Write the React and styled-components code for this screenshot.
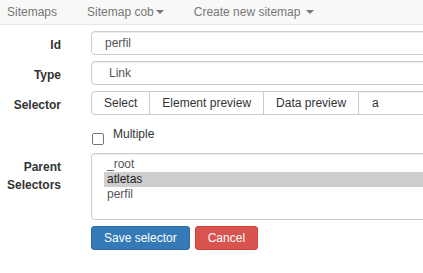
import React from "react";
import styled, { createGlobalStyle } from "styled-components";

const GlobalStyle = createGlobalStyle`
  html, body {
    margin: 0;
    padding: 0;
    overflow: hidden;
    background: #fff;
  }
  body {
    font-family: "Liberation Sans", Arial, sans-serif;
    font-size: 12px;
    color: #333;
  }
  * {
    box-sizing: border-box;
  }
`;

const parents = ["_root", "atletas", "perfil"];

const App = () => {
  return (
    <Page>
      <GlobalStyle />
      <Navbar>
        <NavItem first>Sitemaps</NavItem>
        <NavItem>
          Sitemap cob
          <Caret />
        </NavItem>
        <NavItem>
          Create new sitemap <Caret />
        </NavItem>
      </Navbar>

      <Form>
        <Label>Id</Label>
        <TextInput defaultValue="perfil" />

        <Label>Type</Label>
        <TypeSelect defaultValue="Link">
          <option>Link</option>
        </TypeSelect>

        <Label>Selector</Label>
        <InputGroup>
          <GroupButton first>Select</GroupButton>
          <GroupButton>Element preview</GroupButton>
          <GroupButton>Data preview</GroupButton>
          <GroupInput defaultValue="a" />
        </InputGroup>

        <span />
        <CheckRow>
          <CheckBox type="checkbox" />
          Multiple
        </CheckRow>

        <Label two>Parent Selectors</Label>
        <ParentList>
          {parents.map((p) => (
            <ParentOption key={p} selected={p === "atletas"}>
              {p}
            </ParentOption>
          ))}
        </ParentList>

        <span />
        <Actions>
          <ActionButton variant="primary">Save selector</ActionButton>
          <ActionButton variant="danger">Cancel</ActionButton>
        </Actions>
      </Form>
    </Page>
  );
};

const Page = styled.div`
  width: 640px;
`;

const Navbar = styled.div`
  display: flex;
  align-items: center;
  height: 25px;
  padding-bottom: 1px;
  background-color: #f8f8f8;
  border-bottom: 1px solid #e7e7e7;
  color: #777;
`;

const NavItem = styled.div`
  display: flex;
  align-items: center;
  padding: 0 15px 0 ${(p) => (p.first ? "7px" : "15px")};
  white-space: pre;
`;

const Caret = styled.span`
  display: inline-block;
  width: 0;
  height: 0;
  margin-left: 2px;
  margin-top: 1px;
  border-top: 4px solid #777;
  border-left: 4px solid transparent;
  border-right: 4px solid transparent;
`;

const Form = styled.div`
  display: grid;
  grid-template-columns: 61px 1fr;
  column-gap: 30px;
  row-gap: 6px;
  padding-top: 6px;
`;

const Label = styled.div`
  text-align: right;
  font-weight: bold;
  line-height: ${(p) => (p.two ? "18px" : "17px")};
  padding-top: ${(p) => (p.two ? "5px" : "6px")};
`;

const fieldBase = `
  height: 24px;
  border: 1px solid #ccc;
  border-radius: 4px;
  background: #fff;
  color: #555;
  font-family: "Liberation Sans", Arial, sans-serif;
  font-size: 12px;
  outline: none;
  box-shadow: inset 0 1px 1px rgba(0, 0, 0, 0.075);
`;

const TextInput = styled.input`
  ${fieldBase}
  width: 100%;
  padding: 0 13px;
`;

const TypeSelect = styled.select`
  ${fieldBase}
  appearance: none;
  width: 100%;
  padding: 0 17px;
`;

const InputGroup = styled.div`
  display: flex;
  height: 24px;
`;

const GroupButton = styled.button`
  height: 24px;
  padding: 0 12px;
  margin-left: ${(p) => (p.first ? "0" : "-1px")};
  border: 1px solid #ccc;
  border-radius: ${(p) => (p.first ? "4px 0 0 4px" : "0")};
  background: #fff;
  color: #333;
  font-family: "Liberation Sans", Arial, sans-serif;
  font-size: 12px;
  white-space: nowrap;
`;

const GroupInput = styled.input`
  ${fieldBase}
  flex: 1;
  margin-left: -1px;
  border-radius: 0 4px 4px 0;
  padding: 0 13px;
  color: #333;
`;

const CheckRow = styled.label`
  display: flex;
  align-items: flex-start;
  gap: 9px;
  margin-top: 6px;
  height: 20px;
  line-height: 14px;
`;

const CheckBox = styled.input`
  appearance: none;
  width: 12px;
  height: 12px;
  margin: 6px 0 0 1px;
  border: 1px solid #767676;
  border-radius: 2px;
  background: #fff;
`;

const ParentList = styled.div`
  ${fieldBase}
  height: 67px;
  padding: 3px 12px;
  overflow: hidden;
`;

const ParentOption = styled.div`
  height: 15px;
  line-height: 15px;
  padding: 0 3px;
  background: ${(p) => (p.selected ? "#cecece" : "transparent")};
  color: ${(p) => (p.selected ? "#222" : "#555")};
`;

const Actions = styled.div`
  display: flex;
  gap: 5px;
`;

const ActionButton = styled.button`
  height: 24px;
  padding: 0 12px;
  border-radius: 3px;
  border: 1px solid
    ${(p) => (p.variant === "primary" ? "#2e6da4" : "#d43f3a")};
  background: ${(p) => (p.variant === "primary" ? "#337ab7" : "#d9534f")};
  color: #fff;
  font-family: "Liberation Sans", Arial, sans-serif;
  font-size: 12px;
`;

export default App;
